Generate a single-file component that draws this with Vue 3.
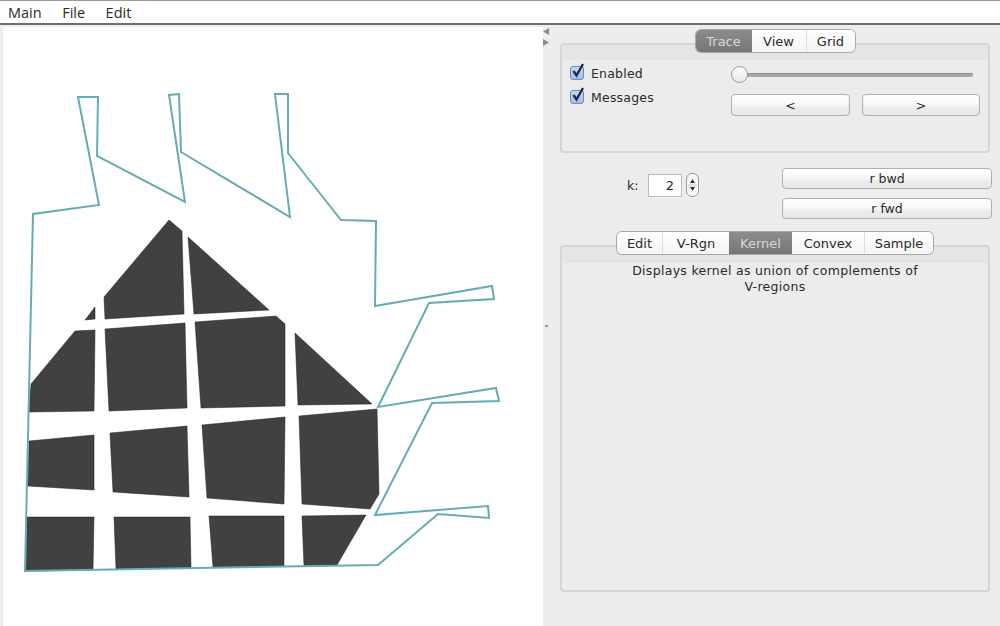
<script setup>
const outline = "25,571 33,214 99,205 78,97 98,97 97,156 185,202 169,95 179,94 181,152 290,217 275,94 288,94 288,153 341,220 376,221 375,306 492,286 494,299 429,303 378,407 496,388 499,401 432,403 375,515 488,506 489,518 438,514 378,565";
const shapes = [
  "169,220 182,231 184,314 105,319 104,297",
  "188,237 269,310 194,314",
  "95,307 95,319 85,320",
  "75,331 95,330 94,411 29,412 31,384",
  "105,329 185,323 187,408 109,411",
  "195,322 276,316 285,324 285,406 201,408",
  "295,333 372,404 298,405",
  "29,441 94,435 94,490 28,486",
  "110,433 187,426 189,497 113,492",
  "202,425 285,417 284,504 207,498",
  "299,416 377,409 379,494 370,509 302,504",
  "27,517 94,517 93,570 26,571",
  "114,517 190,517 191,568 116,569",
  "209,516 284,516 284,566 213,567",
  "302,516 366,515 337,565 304,566",
];
const tabsA = [
  { label: "Trace", w: 56, on: true },
  { label: "View", w: 54 },
  { label: "Grid", w: 49 },
];
const tabsB = [
  { label: "Edit", w: 45 },
  { label: "V-Rgn", w: 67 },
  { label: "Kernel", w: 63, on: true },
  { label: "Convex", w: 72 },
  { label: "Sample", w: 69 },
];
const checks = ["Enabled", "Messages"];
</script>

<template>
  <div class="app">
    <nav class="menu">
      <span>Main</span><span>File</span><span>Edit</span>
    </nav>
    <div class="body">
      <div class="canvas">
        <svg class="drawing" viewBox="3 27 540 599" width="540" height="599">
          <polygon v-for="(s, i) in shapes" :key="i" :points="s" fill="#414141" stroke="#1c1c1c" stroke-width="0.5" />
          <polygon :points="outline" fill="none" stroke="#66adb2" stroke-width="2" />
        </svg>
      </div>
      <div class="divider">
        <div class="arrows">
          <svg width="6" height="7" viewBox="0 0 6 7"><path d="M6 0V7L0 3.5Z" fill="#8a8a8a" /></svg>
          <svg width="6" height="7" viewBox="0 0 6 7"><path d="M0 0V7L6 3.5Z" fill="#8a8a8a" /></svg>
        </div>
        <div class="grip"></div>
      </div>
      <div class="panel">
        <section class="tabbed first">
          <div class="tabs">
            <button v-for="t in tabsA" :key="t.label" class="tab" :class="{ on: t.on }" :style="{ width: t.w + 'px' }">{{ t.label }}</button>
          </div>
          <div class="box box-a">
            <div class="strip"></div>
            <div class="trace">
              <div class="checks">
                <label v-for="c in checks" :key="c" class="check">
                  <span class="cb">
                    <svg width="17" height="18" viewBox="0 0 17 18"><path d="M4.5 10 L7.5 14.5 L14 3" fill="none" stroke="#1b2a48" stroke-width="2.3" /></svg>
                  </span>
                  {{ c }}
                </label>
              </div>
              <div class="controls">
                <div class="slider"><span class="thumb"></span></div>
                <div class="pair">
                  <button class="btn">&lt;</button>
                  <button class="btn">&gt;</button>
                </div>
              </div>
            </div>
          </div>
        </section>

        <div class="krow">
          <div class="kfield">
            <span class="klabel">k:</span>
            <span class="kinput">2</span>
            <span class="spin">
              <svg width="11" height="22" viewBox="0 0 11 22"><path d="M5.5 5 L8 9 H3Z M5.5 17 L8 13 H3Z" fill="#333" /><path d="M1 11H10" stroke="#ccc" /></svg>
            </span>
          </div>
          <div class="rbtns">
            <button class="btn">r bwd</button>
            <button class="btn">r fwd</button>
          </div>
        </div>

        <section class="tabbed">
          <div class="tabs">
            <button v-for="t in tabsB" :key="t.label" class="tab" :class="{ on: t.on }" :style="{ width: t.w + 'px' }">{{ t.label }}</button>
          </div>
          <div class="box box-b">
            <div class="strip strip-b"></div>
            <p class="desc">Displays kernel as union of complements of<br />V-regions</p>
          </div>
        </section>
      </div>
    </div>
  </div>
</template>

<style>
html, body { margin: 0; background: #ededed; overflow: hidden; }
</style>

<style scoped>
.app {
  width: 1000px;
  height: 626px;
  display: flex;
  flex-direction: column;
  font-family: "DejaVu Sans", sans-serif;
  color: #2a2a2a;
  overflow: hidden;
}
.menu {
  height: 22px;
  box-sizing: content-box;
  background: #fff;
  border-top: 1px solid #9a9a9a;
  border-bottom: 2px solid #6e6e6e;
  display: flex;
  gap: 20.5px;
  padding-left: 8px;
  align-items: center;
  font-size: 14.5px;
  font-family: "Open Sans", sans-serif;
}
.body {
  flex: 1;
  display: flex;
  padding-top: 2px;
  min-height: 0;
}
.canvas {
  margin-left: 3px;
  width: 540px;
  background: #fff;
}
.drawing { display: block; }
.divider {
  width: 17px;
  flex: none;
  display: flex;
  flex-direction: column;
  align-items: flex-start;
}
.arrows {
  margin-top: 1px;
  display: flex;
  flex-direction: column;
  gap: 4px;
}
.grip {
  width: 3px;
  height: 2px;
  margin: 279px 0 0 2px;
  background: #999;
}
.panel {
  width: 440px;
  flex: none;
  padding-top: 3px;
  display: flex;
  flex-direction: column;
  font-size: 12.5px;
}
.tabbed {
  width: 430px;
  display: flex;
  flex-direction: column;
  align-items: center;
}
.tabs {
  height: 22px;
  display: flex;
  margin-bottom: -9px;
  position: relative;
  z-index: 1;
  border-radius: 5px;
  box-shadow: 0 0 0 1px #a8a8a8;
  background: #fff;
  overflow: hidden;
}
.tab {
  border: 0;
  padding: 0;
  font: inherit;
  font-size: 13px;
  color: #2a2a2a;
  background: linear-gradient(#fff, #f4f4f4);
  border-left: 1px solid #ddd;
}
.tab:first-child { border-left: 0; }
.tab.on {
  background: linear-gradient(#8c8c8c, #767676);
  color: #d8d8d8;
  border-left: 0;
}
.tab.on + .tab { border-left: 0; }
.box {
  width: 100%;
  box-sizing: border-box;
  border: 2px solid #d6d6d6;
  border-radius: 4px;
  background: #ececec;
}
.box-a { height: 110px; }
.box-b { height: 347px; }
.strip { height: 15px; background: #e5e5e5; }
.trace {
  display: flex;
  padding: 3px 0 0 8px;
}
.checks {
  width: 161px;
  display: flex;
  flex-direction: column;
  gap: 4px;
}
.check {
  display: flex;
  align-items: center;
  gap: 7px;
  height: 20px;
  letter-spacing: 0.2px;
}
.cb {
  width: 14px;
  height: 14px;
  box-sizing: border-box;
  border: 1px solid #7389ab;
  border-radius: 3px;
  background: linear-gradient(#c6d8f2, #a4c0ea);
  display: flex;
  align-items: flex-end;
  justify-content: center;
}
.cb svg { flex: none; }
.controls {
  width: 249px;
  display: flex;
  flex-direction: column;
}
.slider {
  position: relative;
  height: 4px;
  margin: 10px 7px 0 9px;
  background: #a9a9a9;
  border-radius: 2px;
  box-shadow: inset 0 1px 0 #8d8d8d;
}
.thumb {
  position: absolute;
  left: -9px;
  top: -7px;
  width: 17px;
  height: 17px;
  box-sizing: border-box;
  border-radius: 50%;
  border: 1px solid #999;
  background: linear-gradient(#fff, #e6e6e6);
}
.pair {
  display: flex;
  justify-content: space-between;
  margin-top: 17px;
}
.pair .btn { width: 119px; }
.pair .btn:last-child { width: 118px; }
.btn {
  height: 22px;
  box-sizing: border-box;
  border: 1px solid #b0b0b0;
  border-radius: 4px;
  background: linear-gradient(#fff 0%, #f8f8f8 45%, #ececec 65%, #e8e8e8 100%);
  font: inherit;
  color: #2a2a2a;
  padding: 0;
}
.krow {
  display: flex;
  margin-top: 15px;
  height: 51px;
}
.kfield {
  display: flex;
  align-items: center;
  height: 24px;
  margin: 5px 0 0 67px;
  width: 155px;
}
.klabel { width: 21px; }
.kinput {
  width: 34px;
  height: 23px;
  box-sizing: border-box;
  background: #fff;
  border: 1px solid #bbb;
  text-align: right;
  padding-right: 7px;
  line-height: 21px;
  font-size: 13px;
}
.spin {
  margin-left: 4px;
  width: 13px;
  height: 24px;
  box-sizing: border-box;
  border: 1px solid #9a9a9a;
  border-radius: 6px;
  background: #f8f8f8;
  display: flex;
  align-items: center;
  justify-content: center;
  overflow: hidden;
}
.spin svg { flex: none; }
.rbtns {
  width: 210px;
  display: flex;
  flex-direction: column;
  gap: 9px;
}
.rbtns .btn { height: 21px; }
.krow + .tabbed { margin-top: 13px; }
.strip-b { height: 16px; }
.desc {
  margin: 0;
  text-align: center;
  line-height: 16px;
  letter-spacing: 0.3px;
}
</style>
